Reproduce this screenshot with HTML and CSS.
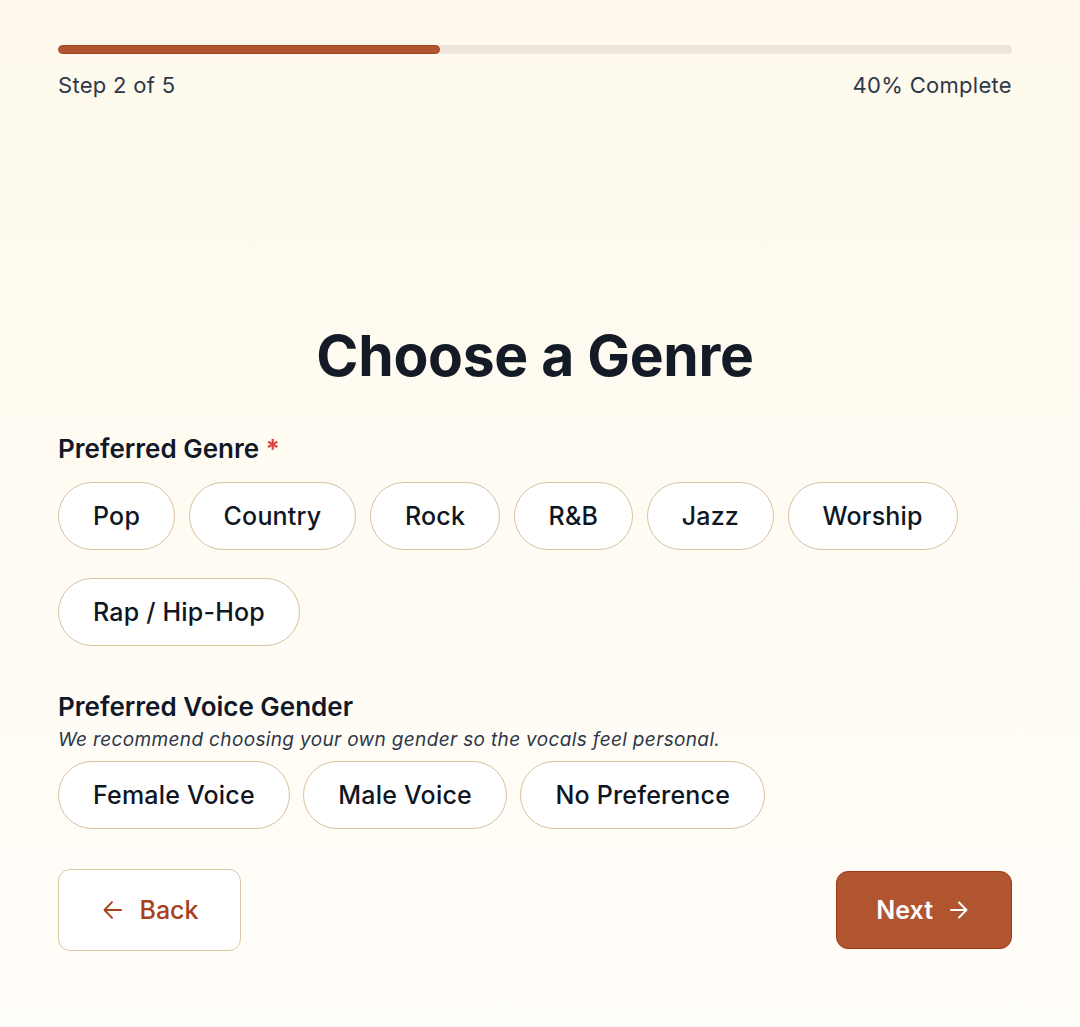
FILE: index.html
```html
<!DOCTYPE html>
<html lang="en">
<head>
<meta charset="utf-8">
<title>Choose a Genre</title>
<link rel="stylesheet" href="styles.css">
</head>
<body>
<div class="page">
  <div class="progress">
    <div class="track"><div class="fill" style="width:40%"></div></div>
    <div class="progress-meta">
      <span>Step 2 of 5</span>
      <span>40% Complete</span>
    </div>
  </div>

  <main class="form">
    <h1 class="title">Choose a Genre</h1>

    <section class="field">
      <h2 class="label">Preferred Genre <span class="req">*</span></h2>
      <div class="pills">
        <button class="pill">Pop</button>
        <button class="pill">Country</button>
        <button class="pill">Rock</button>
        <button class="pill">R&amp;B</button>
        <button class="pill">Jazz</button>
        <button class="pill">Worship</button>
        <button class="pill">Rap / Hip-Hop</button>
      </div>
    </section>

    <section class="field voice">
      <h2 class="label">Preferred Voice Gender</h2>
      <p class="hint">We recommend choosing your own gender so the vocals feel personal.</p>
      <div class="pills">
        <button class="pill">Female Voice</button>
        <button class="pill">Male Voice</button>
        <button class="pill">No Preference</button>
      </div>
    </section>

    <div class="nav">
      <button class="btn back">
        <svg class="arrow" width="19" height="18" viewBox="0 0 19 18" fill="none" stroke="currentColor" stroke-width="1.9" stroke-linecap="round" stroke-linejoin="round"><path d="M18 9H1.5M9 1.2L1.5 9 9 16.8"/></svg>
        <span>Back</span>
      </button>
      <button class="btn next">
        <span>Next</span>
        <svg class="arrow" width="18" height="18" viewBox="0 0 18 18" fill="none" stroke="currentColor" stroke-width="1.9" stroke-linecap="round" stroke-linejoin="round"><path d="M1 9h15.5M9 1.5L16.5 9 9 16.5"/></svg>
      </button>
    </div>
  </main>
</div>
</body>
</html>
```

FILE: styles.css
```css
* { box-sizing: border-box; }
html, body { margin: 0; padding: 0; }
body {
  min-height: 1027px;
  background: linear-gradient(180deg, #fef9ec 0%, #fffcf4 60%, #fffdf9 100%);
  font-family: Inter, "Noto Sans", sans-serif;
  color: #111827;
}
.page {
  padding: 45px 68px 0 58px;
}
.track {
  height: 9px;
  border-radius: 999px;
  background: #efe5da;
  overflow: hidden;
}
.fill {
  height: 100%;
  background: #b0552f;
  border: 1px solid #a3441f;
  border-radius: 999px;
}
.progress-meta {
  display: flex;
  justify-content: space-between;
  margin-top: 17px;
  font-size: 22px;
  line-height: 28px;
  letter-spacing: 0.3px;
  color: #2d3748;
}
.form {
  margin-top: 221px;
}
.title {
  margin: 0;
  text-align: center;
  font-size: 57px;
  line-height: 72px;
  font-weight: 700;
  letter-spacing: -0.3px;
  color: #141a26;
}
.field { margin-top: 41px; }
.label {
  margin: 0;
  font-size: 26px;
  line-height: 32px;
  font-weight: 600;
  color: #111827;
}
.req { color: #e0403a; }
.pills {
  display: flex;
  flex-wrap: wrap;
  gap: 28px 13.5px;
  margin-top: 17px;
}
.pill {
  height: 68px;
  padding: 0 34px;
  border: 1.5px solid #d6c19e;
  border-radius: 999px;
  background: #fff;
  font-family: inherit;
  font-size: 25px;
  font-weight: 500;
  letter-spacing: 0.2px;
  color: #0f1623;
}
.voice { margin-top: 45px; }
.hint {
  margin: 5px 0 0;
  font-size: 19px;
  line-height: 24px;
  letter-spacing: 0.35px;
  font-style: italic;
  color: #2d3748;
}
.voice .pills { margin-top: 9px; }
.nav {
  display: flex;
  justify-content: space-between;
  align-items: center;
  margin-top: 40px;
}
.btn {
  display: inline-flex;
  align-items: center;
  font-family: inherit;
  font-size: 25px;
  border-radius: 12px;
}
.back {
  height: 82px;
  gap: 18px;
  padding: 0 41px 0 43.5px;
  background: #fff;
  border: 1.5px solid #dcc7a3;
  color: #a8401b;
  font-weight: 500;
}
.next {
  height: 78px;
  gap: 17px;
  padding: 0 43px 0 39px;
  background: #b0552f;
  border: 1px solid #9c3a18;
  color: #fff;
  font-weight: 600;
}
```
